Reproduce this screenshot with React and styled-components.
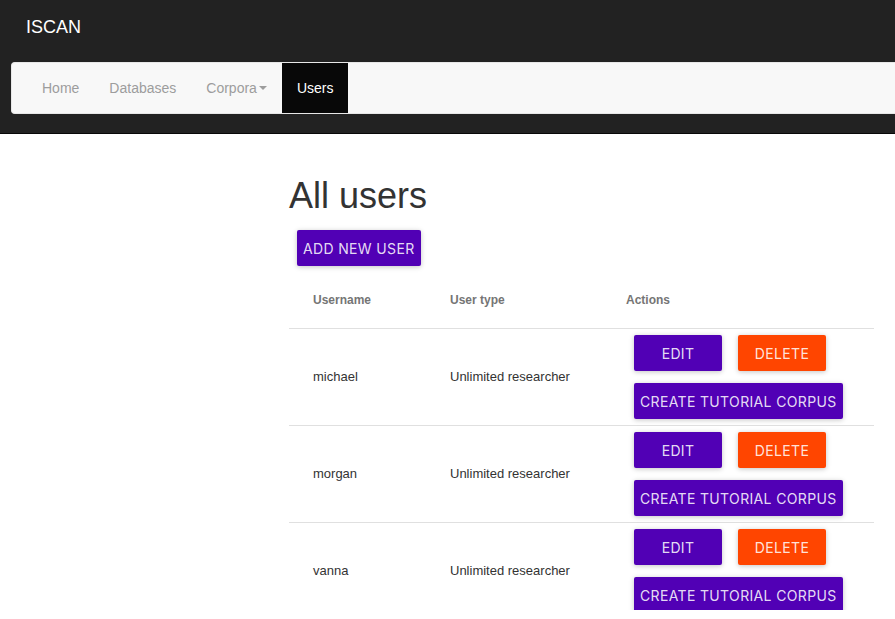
import React from "react";
import styled, { createGlobalStyle } from "styled-components";

const GlobalStyle = createGlobalStyle`
  body {
    margin: 0;
    background: #fff;
    font-family: "Liberation Sans", Arial, sans-serif;
    font-size: 14px;
    color: #333;
  }
`;

const Page = styled.div`
  height: 610px;
  overflow: hidden;
`;

const Header = styled.header`
  background: #222;
  border-bottom: 1px solid #080808;
  height: 134px;
  padding: 0 0 0 11px;
  box-sizing: border-box;
`;

const Brand = styled.div`
  color: #fff;
  font-size: 18px;
  height: 54px;
  line-height: 54px;
  padding-left: 15px;
`;

const NavBar = styled.nav`
  margin-top: 8px;
  display: flex;
  height: 52px;
  box-sizing: border-box;
  background: #f8f8f8;
  border: 1px solid #e7e7e7;
  border-right: none;
  border-radius: 4px 0 0 4px;
  padding-left: 15px;
`;

const NavItem = styled.a`
  display: flex;
  align-items: center;
  padding: 0 15px;
  height: 50px;
  font-size: 14px;
  color: ${(p) => (p.$active ? "#fff" : "#9d9d9d")};
  background: ${(p) => (p.$active ? "#080808" : "transparent")};
  text-decoration: none;
`;

const Caret = styled.span`
  display: inline-block;
  margin-left: 2px;
  width: 0;
  height: 0;
  border-top: 4px solid #9d9d9d;
  border-left: 4px solid transparent;
  border-right: 4px solid transparent;
`;

const Main = styled.main`
  padding-left: 289px;
  width: 585px;
`;

const Title = styled.h1`
  margin: 40px 0 12px;
  font-size: 36px;
  font-weight: 400;
  line-height: 44px;
  color: #333;
`;

const Button = styled.button`
  font-family: Inter, Roboto, "Liberation Sans", sans-serif;
  font-size: 14px;
  letter-spacing: 0.35px;
  text-transform: uppercase;
  min-width: 88px;
  height: 36px;
  padding: 0 6px;
  border: none;
  border-radius: 2px;
  color: rgba(255, 255, 255, 0.87);
  background: ${(p) => (p.$danger ? "#ff4500" : "#5100b5")};
  box-shadow: 0 1px 6px rgba(0, 0, 0, 0.12), 0 1px 4px rgba(0, 0, 0, 0.12);
  cursor: pointer;
`;

const AddButton = styled(Button)`
  margin-left: 8px;
`;

const Table = styled.table`
  width: 100%;
  table-layout: fixed;
  border-collapse: collapse;
  margin-top: 8px;
`;

const Th = styled.th`
  text-align: left;
  font-size: 12px;
  font-weight: 700;
  color: #757575;
  height: 52px;
  padding: 0 24px 2px;
  border-bottom: 1px solid #e0e0e0;
  width: ${(p) => p.$w};
`;

const Td = styled.td`
  font-size: 13px;
  color: #333;
  padding: 0 24px 2px;
  height: 94px;
  border-bottom: 1px solid #e0e0e0;
`;

const ActionsCell = styled.td`
  padding: 0 24px;
  height: 96px;
  border-bottom: 1px solid #e0e0e0;
`;

const Actions = styled.div`
  display: flex;
  flex-wrap: wrap;
  gap: 12px 16px;
  width: 220px;
  padding-left: 8px;
`;

const users = ["michael", "morgan", "vanna"];

export default function App() {
  return (
    <Page>
      <GlobalStyle />
      <Header>
        <Brand>ISCAN</Brand>
        <NavBar>
          <NavItem>Home</NavItem>
          <NavItem>Databases</NavItem>
          <NavItem>
            Corpora
            <Caret />
          </NavItem>
          <NavItem $active>Users</NavItem>
        </NavBar>
      </Header>
      <Main>
        <Title>All users</Title>
        <AddButton>Add new user</AddButton>
        <Table>
          <thead>
            <tr>
              <Th $w="89px">Username</Th>
              <Th $w="128px">User type</Th>
              <Th>Actions</Th>
            </tr>
          </thead>
          <tbody>
            {users.map((u) => (
              <tr key={u}>
                <Td>{u}</Td>
                <Td>Unlimited researcher</Td>
                <ActionsCell>
                  <Actions>
                    <Button>Edit</Button>
                    <Button $danger>Delete</Button>
                    <Button>Create tutorial corpus</Button>
                  </Actions>
                </ActionsCell>
              </tr>
            ))}
          </tbody>
        </Table>
      </Main>
    </Page>
  );
}
